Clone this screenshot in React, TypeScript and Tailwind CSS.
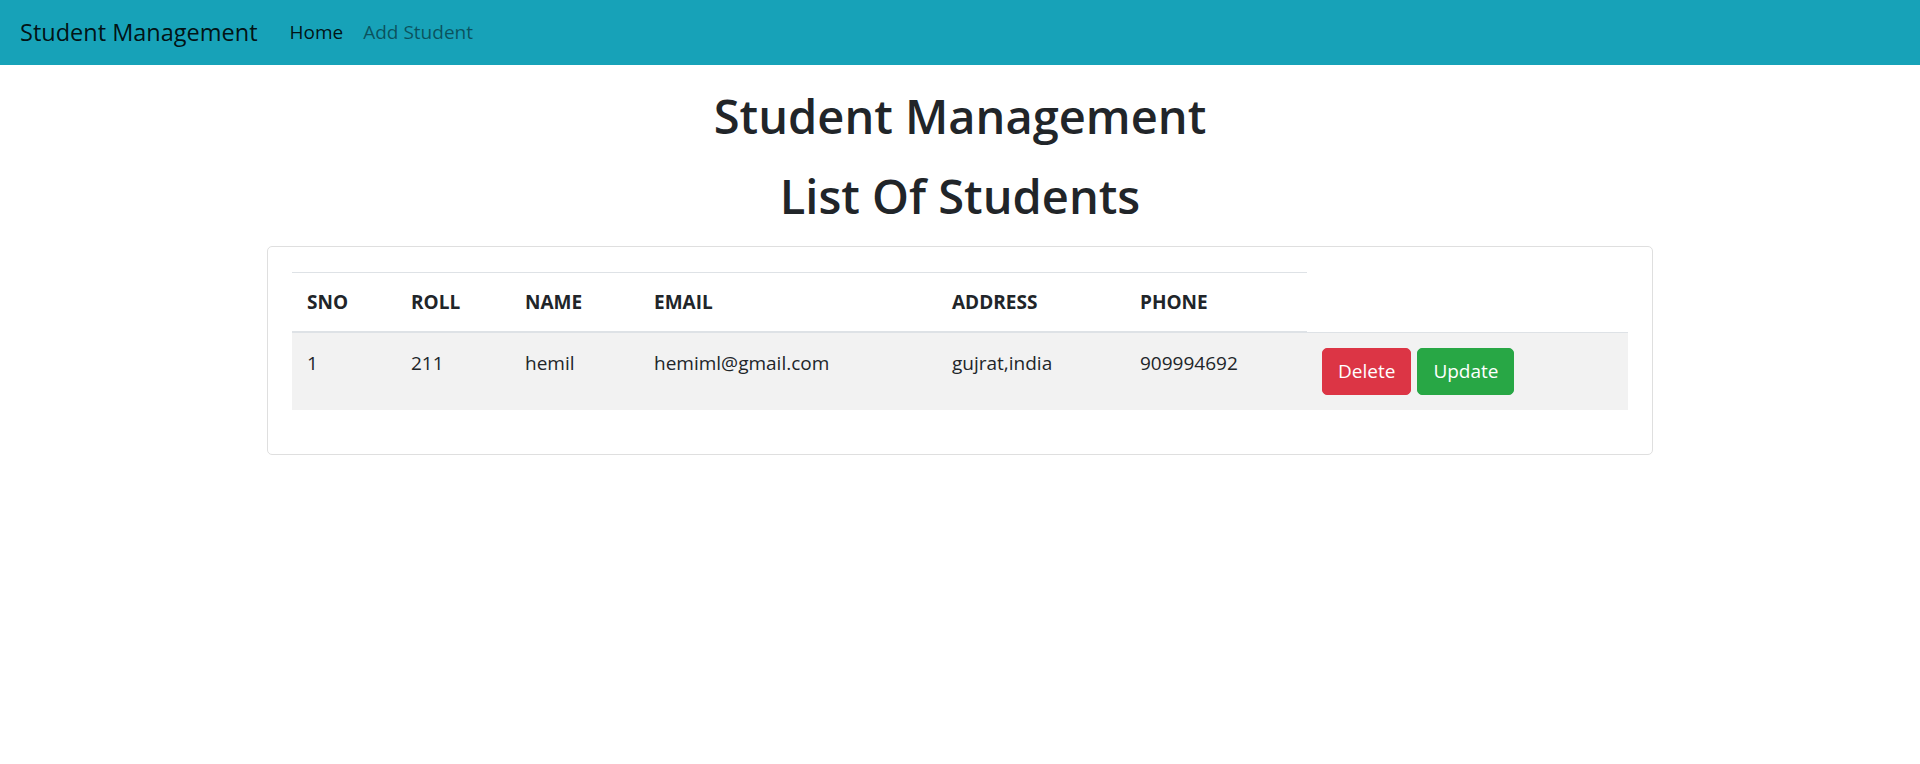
import React from 'react';

const students = [
    { sno: 1, roll: 211, name: 'hemil', email: 'hemiml@gmail.com', address: 'gujrat,india', phone: '909994692' },
];

const cols = [
    { label: 'SNO', w: 'w-[104px]' },
    { label: 'ROLL', w: 'w-[114px]' },
    { label: 'NAME', w: 'w-[129px]' },
    { label: 'EMAIL', w: 'w-[298px]' },
    { label: 'ADDRESS', w: 'w-[188px]' },
    { label: 'PHONE', w: 'w-[182px]' },
];

export default function App() {
    return (
        <div className="min-h-screen bg-white font-['Open_Sans',sans-serif] text-[#212529]">
            {/* navbar */}
            <nav className="h-[65px] bg-[#17a2b8] flex items-center px-[20px]">
                <span className="text-[23.5px] text-black/90 mr-[22px]">Student Management</span>
                <a className="px-[10px] text-[19px] text-black/90">Home</a>
                <a className="px-[10px] text-[19px] text-black/50">Add Student</a>
            </nav>

            <h1 className="mt-[22px] text-center text-[47px] leading-[58px] font-semibold">Student Management</h1>
            <h1 className="mt-[22px] text-center text-[47px] leading-[58px] font-semibold">List Of Students</h1>

            <div className="mx-auto mt-[21px] w-[1386px] border border-[#dfdfdf] rounded-[5px] px-[24px] pt-[25px] pb-[44px]">
                <table className="w-full table-fixed border-collapse text-[19px] leading-[30px]">
                    <thead>
                        <tr>
                            {cols.map((c) => (
                                <th
                                    key={c.label}
                                    className={`${c.w} text-left align-bottom font-bold px-[15px] py-[14px] border-t border-b-2 border-[#dee2e6]`}
                                >
                                    {c.label}
                                </th>
                            ))}
                            <th className="w-[321px]" />
                        </tr>
                    </thead>
                    <tbody>
                        {students.map((s) => (
                            <tr key={s.sno} className="bg-[#f2f2f2]">
                                <td className="align-top px-[15px] py-[15px] border-t border-[#dee2e6]">{s.sno}</td>
                                <td className="align-top px-[15px] py-[15px] border-t border-[#dee2e6]">{s.roll}</td>
                                <td className="align-top px-[15px] py-[15px] border-t border-[#dee2e6]">{s.name}</td>
                                <td className="align-top px-[15px] py-[15px] border-t border-[#dee2e6]">{s.email}</td>
                                <td className="align-top px-[15px] py-[15px] border-t border-[#dee2e6]">{s.address}</td>
                                <td className="align-top px-[15px] py-[15px] border-t border-[#dee2e6]">{s.phone}</td>
                                <td className="align-top px-[15px] py-[15px] border-t border-[#dee2e6]">
                                    <div className="flex gap-[6px]">
                                        <button className="px-[15px] py-[7.5px] leading-[30px] text-white bg-[#dc3545] border border-[#dc3545] rounded-[5px]">
                                            Delete
                                        </button>
                                        <button className="px-[15px] py-[7.5px] leading-[30px] text-white bg-[#28a745] border border-[#28a745] rounded-[5px]">
                                            Update
                                        </button>
                                    </div>
                                </td>
                            </tr>
                        ))}
                    </tbody>
                </table>
            </div>
        </div>
    );
}
